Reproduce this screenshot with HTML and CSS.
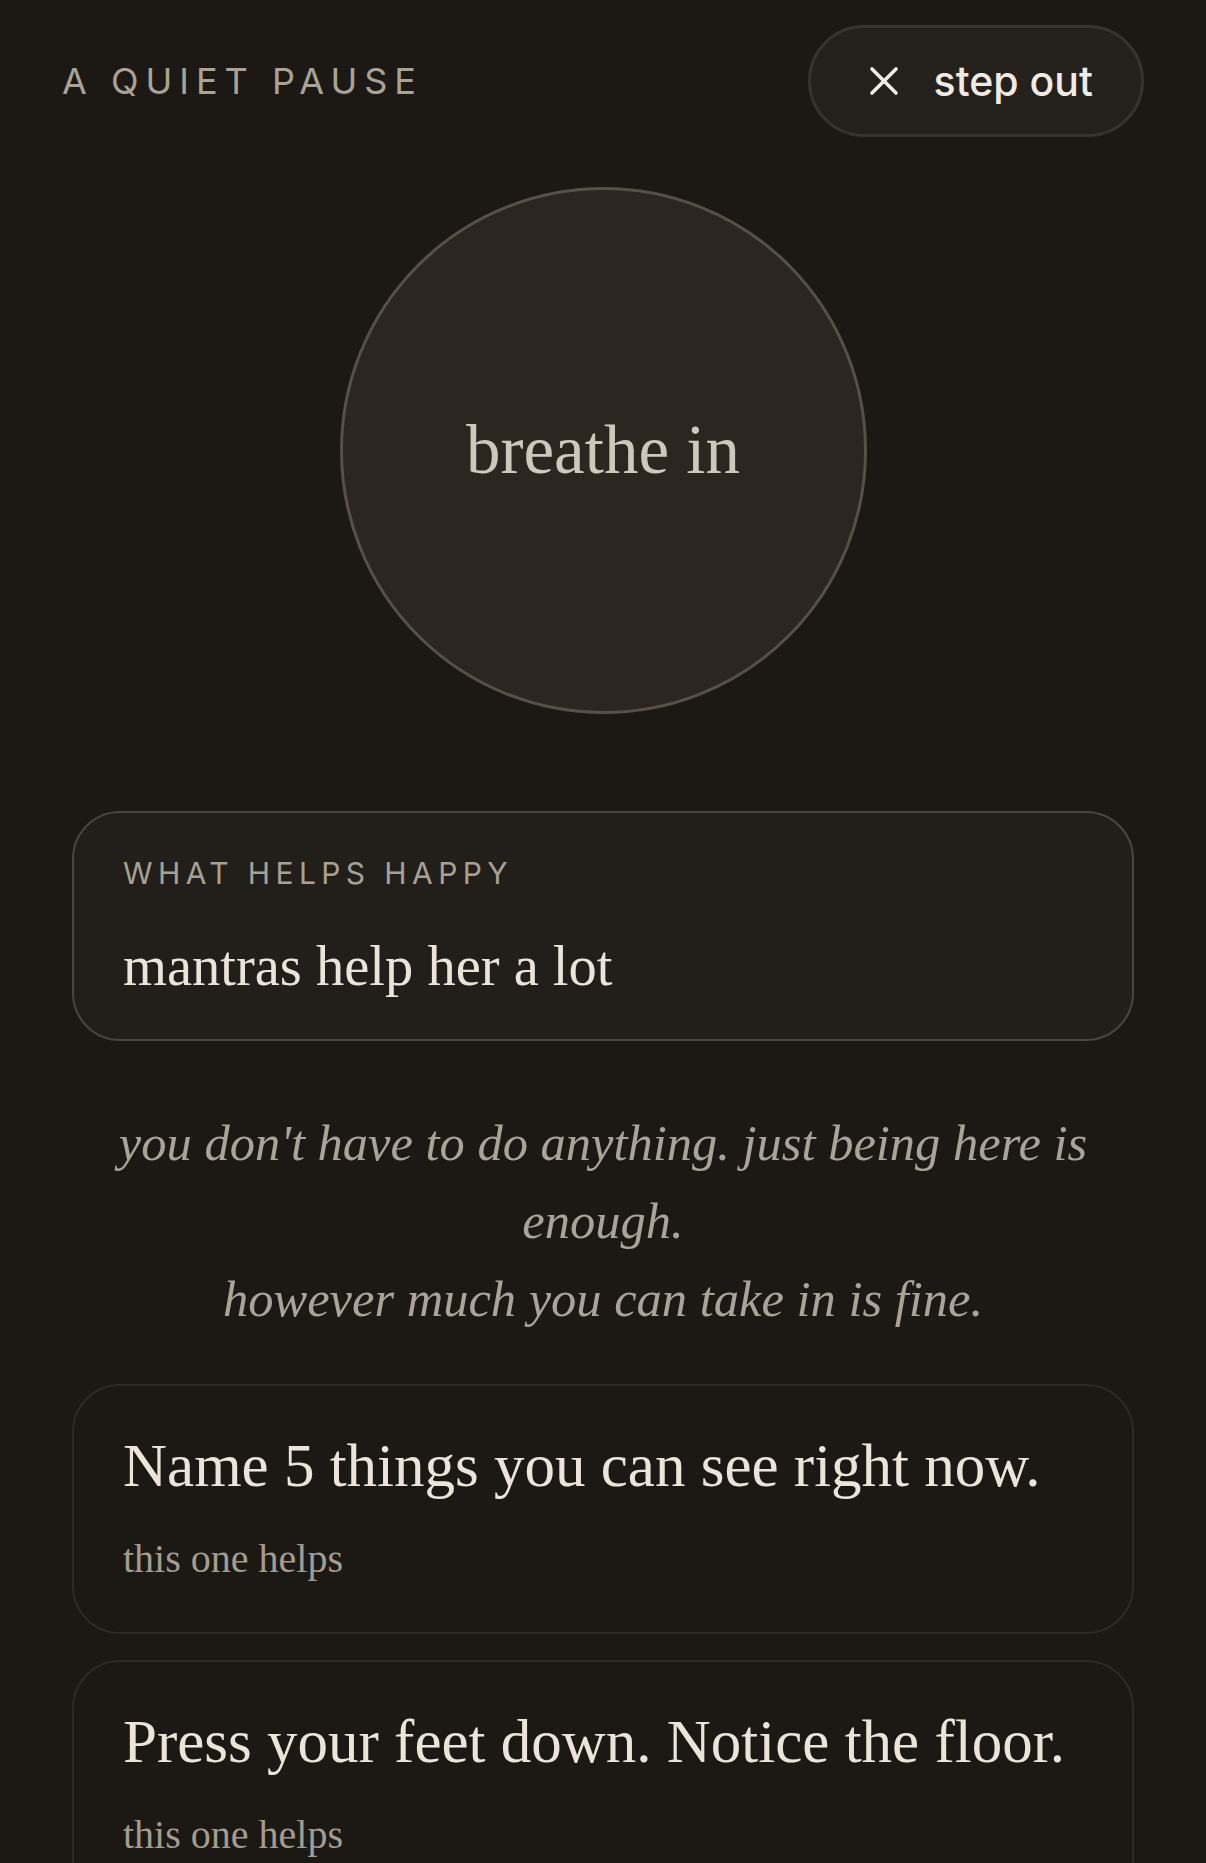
FILE: index.html
```html
<!DOCTYPE html>
<html lang="en">
<head>
<meta charset="utf-8">
<title>A quiet pause</title>
<link rel="stylesheet" href="styles.css">
</head>
<body>
<header class="top">
  <div class="brand">A QUIET PAUSE</div>
  <button class="step-out" type="button">
    <svg class="x-icon" viewBox="0 0 30 30" aria-hidden="true"><path d="M3 3 L27 27 M27 3 L3 27"/></svg>
    <span>step out</span>
  </button>
</header>
<main class="content">
  <div class="breath"><span>breathe in</span></div>
  <section class="helps">
    <div class="helps-label">WHAT HELPS HAPPY</div>
    <div class="helps-text">mantras help her a lot</div>
  </section>
  <p class="reassure">you don't have to do anything. just being here is enough.<br>however much you can take in is fine.</p>
  <section class="prompt">
    <div class="prompt-title">Name 5 things you can see right now.</div>
    <div class="prompt-sub">this one helps</div>
  </section>
  <section class="prompt">
    <div class="prompt-title">Press your feet down. Notice the floor.</div>
    <div class="prompt-sub">this one helps</div>
  </section>
</main>
</body>
</html>
```
FILE: styles.css
```css
html, body {
  margin: 0;
  padding: 0;
  background: #1c1915;
}
body {
  font-family: "Liberation Serif", "Times New Roman", serif;
  color: #e8e2d6;
  min-height: 1863px;
  overflow: hidden;
}
.top {
  display: flex;
  justify-content: space-between;
  align-items: center;
  padding: 25px 62px 0;
}
.brand {
  font-family: Inter, "Liberation Sans", sans-serif;
  font-size: 36px;
  letter-spacing: 7px;
  color: #a9a397;
  line-height: 1;
}
.step-out {
  display: flex;
  align-items: center;
  gap: 35px;
  height: 112px;
  box-sizing: border-box;
  padding: 0 48px 0 58px;
  border: 3px solid #37332d;
  border-radius: 56px;
  background: #24201b;
  color: #f0ebe2;
  font-family: Inter, "Liberation Sans", sans-serif;
  font-size: 41px;
  font-weight: 500;
  line-height: 1;
}
.x-icon {
  width: 30px;
  height: 30px;
  fill: none;
  stroke: #f0ebe2;
  stroke-width: 3.6;
  stroke-linecap: round;
}
.content {
  display: flex;
  flex-direction: column;
  padding: 0 72px;
}
.breath {
  align-self: center;
  width: 527px;
  height: 527px;
  box-sizing: border-box;
  margin-top: 50px;
  border-radius: 50%;
  border: 3px solid #565047;
  background: #2b2620;
  display: flex;
  align-items: center;
  justify-content: center;
  font-size: 69px;
  color: #cec7bb;
}
.helps {
  margin-top: 97px;
  border: 2px solid #4a453d;
  border-radius: 48px;
  background: #221e19;
  padding: 42px 49px 38px;
}
.helps-label {
  font-family: Inter, "Liberation Sans", sans-serif;
  font-size: 30px;
  line-height: 36px;
  letter-spacing: 5.4px;
  color: #a7a195;
}
.helps-text {
  margin-top: 40px;
  font-size: 56.5px;
  line-height: 70px;
  color: #ebe5d9;
}
.reassure {
  margin: 63px 0 0;
  text-align: center;
  font-style: italic;
  font-size: 50.5px;
  line-height: 78px;
  color: #aaa397;
}
.prompt {
  margin-top: 46px;
  border: 2px solid #2e2a25;
  border-radius: 48px;
  padding: 42px 49px 48px;
}
.prompt + .prompt {
  margin-top: 26px;
}
.prompt-title {
  font-size: 61px;
  line-height: 75px;
  color: #ebe5d9;
}
.prompt-sub {
  margin-top: 31px;
  font-size: 40px;
  line-height: 50px;
  color: #a39c90;
}
```
